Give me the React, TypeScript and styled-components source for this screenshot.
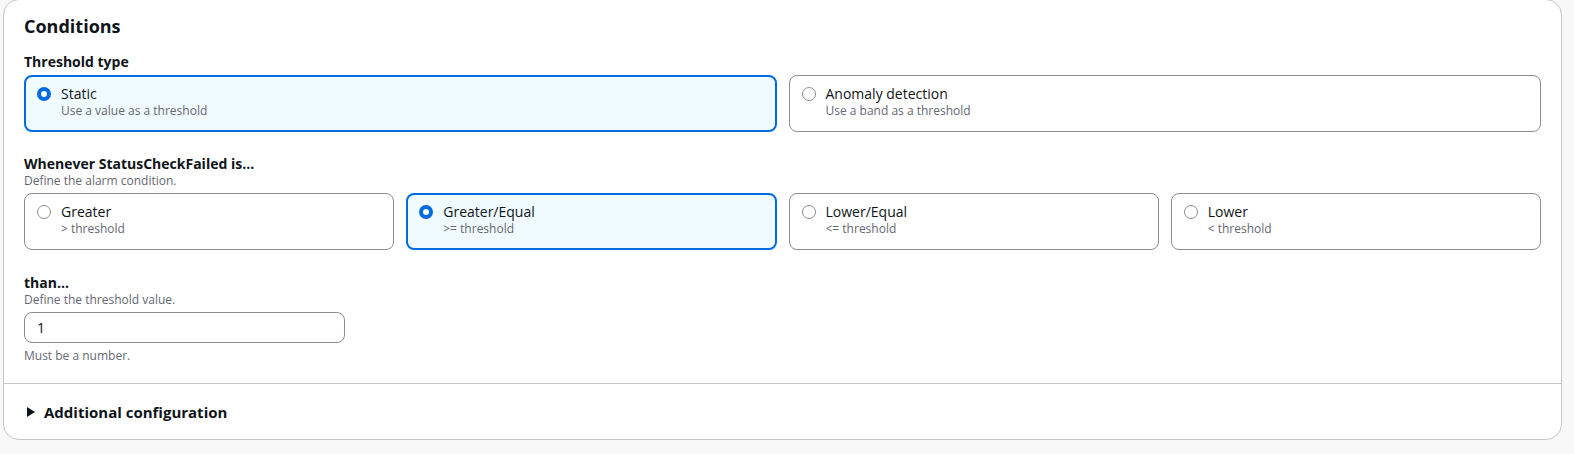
import React, { useState } from 'react'
import styled, { createGlobalStyle } from 'styled-components'

const GlobalStyle = createGlobalStyle`
  html, body {
    margin: 0;
    padding: 0;
    background: #f8f8f8;
  }
  body {
    font-family: "Open Sans", "Noto Sans", "Liberation Sans", sans-serif;
    color: #0f141a;
    -webkit-font-smoothing: antialiased;
  }
`

const Page = styled.div`
  min-height: 100vh;
  padding: 0 12px 0 3px;
  box-sizing: border-box;
`

const Card = styled.section`
  margin-top: -1px;
  background: #ffffff;
  border: 1px solid #c6c6cd;
  border-radius: 16px;
  box-sizing: border-box;
`

const Body = styled.div`
  padding: 15px 20px 19px;
  display: flex;
  flex-direction: column;
`

const Heading = styled.h2`
  margin: 0 0 16px;
  font-size: 18px;
  line-height: 22px;
  font-weight: 700;
  color: #0f141a;
`

const Field = styled.div<{ $spaceAfter?: number }>`
  display: flex;
  flex-direction: column;
  margin-bottom: ${({ $spaceAfter }) => ($spaceAfter ?? 0) + 'px'};
`

const Label = styled.div`
  font-size: 14px;
  line-height: 18px;
  font-weight: 700;
  color: #0f141a;
`

const Description = styled.div`
  font-size: 12px;
  line-height: 16px;
  color: #656871;
`

const Control = styled.div`
  margin-top: 4px;
`

const TileGrid = styled.div<{ $columns: number }>`
  display: grid;
  grid-template-columns: repeat(${({ $columns }) => $columns}, 1fr);
  gap: 12px;
`

const Tile = styled.label<{ $checked: boolean }>`
  display: flex;
  align-items: flex-start;
  gap: 10px;
  height: 57px;
  box-sizing: border-box;
  border-radius: 8px;
  cursor: pointer;
  border: ${({ $checked }) => ($checked ? '2px solid #006ce0' : '1px solid #8c8c94')};
  background: ${({ $checked }) => ($checked ? '#f0fbff' : '#ffffff')};
  padding: ${({ $checked }) => ($checked ? '8px 11px 10px' : '9px 12px 11px')};
`

const RadioCircle = styled.span<{ $checked: boolean }>`
  flex: none;
  width: 14px;
  height: 14px;
  margin-top: 2px;
  border-radius: 50%;
  box-sizing: border-box;
  border: ${({ $checked }) => ($checked ? '4px solid #006ce0' : '1px solid #8c8c94')};
  background: #ffffff;
`

const TileText = styled.div`
  display: flex;
  flex-direction: column;
`

const TileLabel = styled.span`
  font-size: 14px;
  line-height: 18px;
  color: #0f141a;
`

const TileHint = styled.span`
  font-size: 12px;
  line-height: 16px;
  color: #656871;
`

const Input = styled.input`
  display: block;
  width: 321px;
  height: 31px;
  box-sizing: border-box;
  padding: 0 12px;
  border: 1px solid #8c8c94;
  border-radius: 8px;
  font-family: inherit;
  font-size: 14px;
  color: #0f141a;
  background: #ffffff;
  outline: none;
`

const Constraint = styled(Description)`
  margin-top: 5px;
`

const Divider = styled.div`
  border-top: 1px solid #c6c6cd;
`

const ExpandHeader = styled.button`
  display: flex;
  align-items: center;
  gap: 9px;
  width: 100%;
  height: 55px;
  padding: 0 0 0 23px;
  border: none;
  background: none;
  font-family: inherit;
  font-size: 15px;
  line-height: 20px;
  font-weight: 700;
  color: #0f141a;
  cursor: pointer;
  text-align: left;
`

const Caret = styled.span`
  width: 0;
  height: 0;
  border-top: 5px solid transparent;
  border-bottom: 5px solid transparent;
  border-left: 8px solid #0f141a;
`

type Option = { value: string; label: string; hint: string }

const thresholdTypes: Option[] = [
  { value: 'static', label: 'Static', hint: 'Use a value as a threshold' },
  { value: 'anomaly', label: 'Anomaly detection', hint: 'Use a band as a threshold' },
]

const comparisons: Option[] = [
  { value: 'gt', label: 'Greater', hint: '> threshold' },
  { value: 'gte', label: 'Greater/Equal', hint: '>= threshold' },
  { value: 'lte', label: 'Lower/Equal', hint: '<= threshold' },
  { value: 'lt', label: 'Lower', hint: '< threshold' },
]

function Tiles({ options, value, onChange }: { options: Option[]; value: string; onChange: (v: string) => void }) {
  return (
    <TileGrid $columns={options.length}>
      {options.map(o => (
        <Tile key={o.value} $checked={o.value === value} onClick={() => onChange(o.value)}>
          <RadioCircle $checked={o.value === value} />
          <TileText>
            <TileLabel>{o.label}</TileLabel>
            <TileHint>{o.hint}</TileHint>
          </TileText>
        </Tile>
      ))}
    </TileGrid>
  )
}

export default function App() {
  const [type, setType] = useState('static')
  const [comparison, setComparison] = useState('gte')
  const [threshold, setThreshold] = useState('1')

  return (
    <>
      <GlobalStyle />
      <Page>
        <Card>
          <Body>
            <Heading>Conditions</Heading>
            <Field $spaceAfter={23}>
              <Label>Threshold type</Label>
              <Control>
                <Tiles options={thresholdTypes} value={type} onChange={setType} />
              </Control>
            </Field>
            <Field $spaceAfter={24}>
              <Label>Whenever StatusCheckFailed is...</Label>
              <Description>Define the alarm condition.</Description>
              <Control>
                <Tiles options={comparisons} value={comparison} onChange={setComparison} />
              </Control>
            </Field>
            <Field>
              <Label>than...</Label>
              <Description>Define the threshold value.</Description>
              <Control>
                <Input value={threshold} onChange={e => setThreshold(e.target.value)} />
              </Control>
              <Constraint>Must be a number.</Constraint>
            </Field>
          </Body>
          <Divider />
          <ExpandHeader>
            <Caret />
            Additional configuration
          </ExpandHeader>
        </Card>
      </Page>
    </>
  )
}
